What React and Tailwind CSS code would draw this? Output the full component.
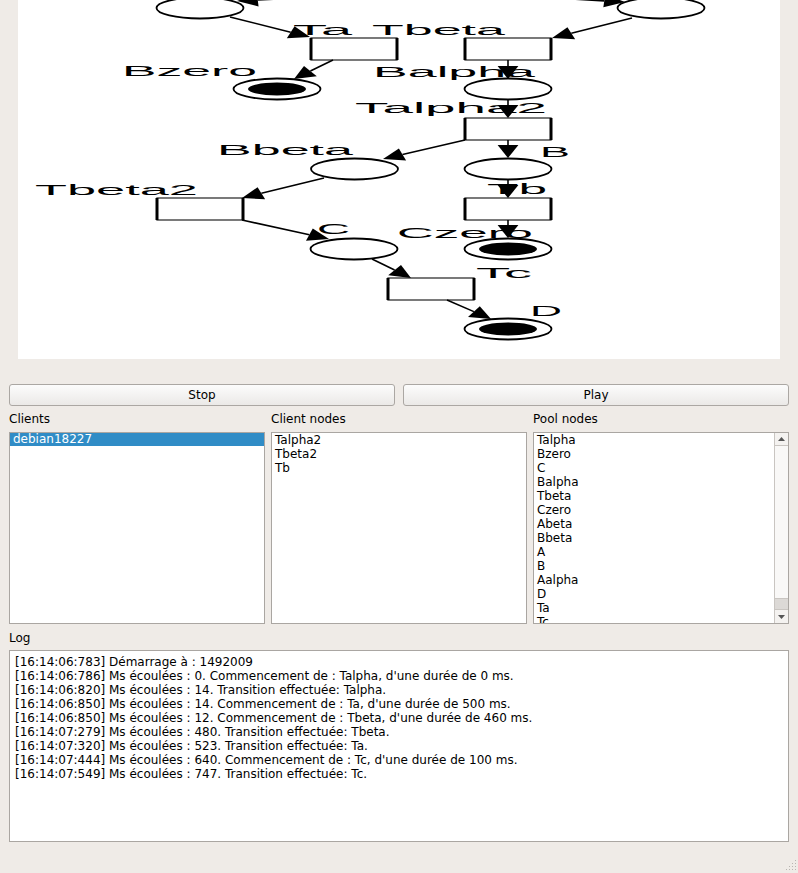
import React from "react";

const S = 1.6;

function Arrow({ x1, y1, x2, y2 }) {
  const ux1 = x1 / S;
  const ux2 = x2 / S;
  const dx = ux2 - ux1;
  const dy = y2 - y1;
  const len = Math.hypot(dx, dy);
  const ex = dx / len;
  const ey = dy / len;
  const L = 13;
  const W = 6.5;
  const bx = ux2 - L * ex;
  const by = y2 - L * ey;
  const p1 = `${(bx - W * ey) * S},${by + W * ex}`;
  const p2 = `${(bx + W * ey) * S},${by - W * ex}`;
  return (
    <g>
      <line x1={x1} y1={y1} x2={bx * S} y2={by} stroke="black" strokeWidth="1.6" />
      <polygon points={`${x2},${y2} ${p1} ${p2}`} fill="black" />
    </g>
  );
}

function Place({ cx, cy, token }) {
  return (
    <g>
      <ellipse cx={cx} cy={cy} rx="43.5" ry="10.5" fill="white" stroke="black" strokeWidth="1.8" />
      {token && <ellipse cx={cx} cy={cy} rx="29" ry="6.5" fill="black" />}
    </g>
  );
}

function Trans({ x, y, w = 86, h = 22 }) {
  return (
    <g>
      <rect x={x} y={y} width={w} height={h} fill="white" stroke="#333" strokeWidth="1.3" />
      <line x1={x} y1={y} x2={x} y2={y + h} stroke="black" strokeWidth="3" />
      <line x1={x + w} y1={y} x2={x + w} y2={y + h} stroke="black" strokeWidth="3" />
    </g>
  );
}

function Label({ x, y, len, children }) {
  return (
    <text
      x={x}
      y={y}
      textLength={len}
      lengthAdjust="spacingAndGlyphs"
      fontFamily="'Liberation Sans', Arial, sans-serif"
      fontSize="15.5"
      fill="black"
    >
      {children}
    </text>
  );
}

function Graph() {
  return (
    <svg width="762" height="359" viewBox="18 0 762 359" className="block">
      <Label x={293} y={34.5} len={59}>Ta</Label>
      <Label x={372} y={34.5} len={133}>Tbeta</Label>
      <Label x={122} y={75.5} len={135}>Bzero</Label>
      <Label x={373} y={77} len={162}>Balpha</Label>
      <Label x={355} y={113} len={192}>Talpha2</Label>
      <Label x={217} y={154.5} len={136}>Bbeta</Label>
      <Label x={540} y={157} len={30}>B</Label>
      <Label x={35} y={194.5} len={163}>Tbeta2</Label>
      <Label x={487} y={194} len={60}>Tb</Label>
      <Label x={317} y={233.5} len={33}>C</Label>
      <Label x={397} y={237.5} len={136}>Czero</Label>
      <Label x={476} y={277.5} len={56}>Tc</Label>
      <Label x={530} y={315.5} len={32}>D</Label>

      <Place cx={200} cy={8} />
      <Place cx={661} cy={8} />
      <Place cx={277} cy={89} token />
      <Place cx={508} cy={89} />
      <Place cx={354.5} cy={169} />
      <Place cx={508} cy={169} />
      <Place cx={354} cy={249} />
      <Place cx={508} cy={249} token />
      <Place cx={508} cy={329} token />

      <Trans x={311} y={38} />
      <Trans x={465} y={38} />
      <Trans x={465} y={118} />
      <Trans x={157} y={198} />
      <Trans x={465} y={198} />
      <Trans x={388} y={278} />

      <Arrow x1={440} y1={-9} x2={237} y2={1} />
      <Arrow x1={430} y1={-9} x2={625} y2={2} />
      <Arrow x1={230} y1={17} x2={310} y2={37} />
      <Arrow x1={632} y1={18} x2={552} y2={38} />
      <Arrow x1={333} y1={60} x2={294} y2={79} />
      <Arrow x1={508} y1={60} x2={508} y2={79} />
      <Arrow x1={508} y1={99} x2={508} y2={118} />
      <Arrow x1={508} y1={140} x2={508} y2={158} />
      <Arrow x1={465} y1={140} x2={383} y2={159} />
      <Arrow x1={324} y1={178} x2={242} y2={198} />
      <Arrow x1={508} y1={180} x2={508} y2={198} />
      <Arrow x1={242} y1={220} x2={329} y2={239} />
      <Arrow x1={508} y1={220} x2={508} y2={238} />
      <Arrow x1={372} y1={259} x2={411} y2={278} />
      <Arrow x1={447} y1={300} x2={491} y2={319} />
    </svg>
  );
}

const clientNodes = ["Talpha2", "Tbeta2", "Tb"];
const poolNodes = [
  "Talpha",
  "Bzero",
  "C",
  "Balpha",
  "Tbeta",
  "Czero",
  "Abeta",
  "Bbeta",
  "A",
  "B",
  "Aalpha",
  "D",
  "Ta",
  "Tc",
];

const logLines = [
  "[16:14:06:783] Démarrage à : 1492009",
  "[16:14:06:786] Ms écoulées : 0. Commencement de : Talpha, d'une durée de 0 ms.",
  "[16:14:06:820] Ms écoulées : 14. Transition effectuée: Talpha.",
  "[16:14:06:850] Ms écoulées : 14. Commencement de : Ta, d'une durée de 500 ms.",
  "[16:14:06:850] Ms écoulées : 12. Commencement de : Tbeta, d'une durée de 460 ms.",
  "[16:14:07:279] Ms écoulées : 480. Transition effectuée: Tbeta.",
  "[16:14:07:320] Ms écoulées : 523. Transition effectuée: Ta.",
  "[16:14:07:444] Ms écoulées : 640. Commencement de : Tc, d'une durée de 100 ms.",
  "[16:14:07:549] Ms écoulées : 747. Transition effectuée: Tc.",
];

function Button({ children }) {
  return (
    <button className="w-[386px] h-[22px] rounded-[3px] border border-[#aba7a3] bg-linear-to-b from-[#fcfcfc] to-[#ebe9e7] flex items-center justify-center text-[12px] leading-[14px] text-black">
      {children}
    </button>
  );
}

function Scrollbar() {
  return (
    <div className="w-[14px] h-full border-l border-[#c9c5c1] flex flex-col bg-[#f4f2f0]">
      <div className="h-[13px] flex items-center justify-center border-b border-[#c9c5c1]">
        <svg width="7" height="4" viewBox="0 0 7 4">
          <polygon points="3.5,0 7,4 0,4" fill="#555" />
        </svg>
      </div>
      <div className="h-[152px] bg-[#f9f8f7]" />
      <div className="flex-1 bg-[#dcd9d6] border-t border-b border-[#c9c5c1]" />
      <div className="h-[13px] flex items-center justify-center">
        <svg width="7" height="4" viewBox="0 0 7 4">
          <polygon points="0,0 7,0 3.5,4" fill="#555" />
        </svg>
      </div>
    </div>
  );
}

export default function App() {
  return (
    <div className="relative w-[798px] h-[873px] bg-[#efebe7] overflow-hidden flex flex-col text-[12px] leading-[14px] text-black font-['DejaVu_Sans',sans-serif]">
      <div className="ml-[18px] w-[762px] h-[359px] bg-white overflow-hidden">
        <Graph />
      </div>

      <div className="flex gap-[8px] px-[9px] mt-[25px]">
        <Button>Stop</Button>
        <Button>Play</Button>
      </div>

      <div className="flex gap-[6px] px-[9px] mt-[6px]">
        <div className="w-[256px] flex flex-col">
          <div className="h-[14px]">Clients</div>
          <div className="mt-[6px] h-[192px] border border-[#aaa6a2] bg-white">
            <div className="h-[13px] leading-[13px] bg-[#308cc6] text-white pl-[3px]">debian18227</div>
          </div>
        </div>
        <div className="w-[256px] flex flex-col">
          <div className="h-[14px]">Client nodes</div>
          <div className="mt-[6px] h-[192px] border border-[#aaa6a2] bg-white">
            {clientNodes.map((n) => (
              <div key={n} className="h-[14px] pl-[3px]">{n}</div>
            ))}
          </div>
        </div>
        <div className="w-[256px] flex flex-col">
          <div className="h-[14px]">Pool nodes</div>
          <div className="mt-[6px] h-[192px] border border-[#aaa6a2] bg-white flex overflow-hidden">
            <div className="flex-1 overflow-hidden">
              {poolNodes.map((n) => (
                <div key={n} className="h-[14px] pl-[3px]">{n}</div>
              ))}
            </div>
            <Scrollbar />
          </div>
        </div>
      </div>

      <div className="px-[9px] mt-[7px]">
        <div className="h-[14px]">Log</div>
        <div className="mt-[5px] h-[192px] border border-[#aaa6a2] bg-white pt-[4px] px-[5px]">
          {logLines.map((l, i) => (
            <div key={i} className="h-[14px] whitespace-pre">{l}</div>
          ))}
        </div>
      </div>

      <svg className="absolute right-[1px] bottom-[1px]" width="14" height="14" viewBox="0 0 14 14">
        {[
          [12, 2], [12, 5], [12, 8], [12, 11],
          [9, 5], [9, 8], [9, 11],
          [6, 8], [6, 11],
          [3, 11],
        ].map(([x, y], i) => (
          <rect key={i} x={x} y={y} width="1" height="1" fill="#b9b5b1" />
        ))}
      </svg>
    </div>
  );
}
